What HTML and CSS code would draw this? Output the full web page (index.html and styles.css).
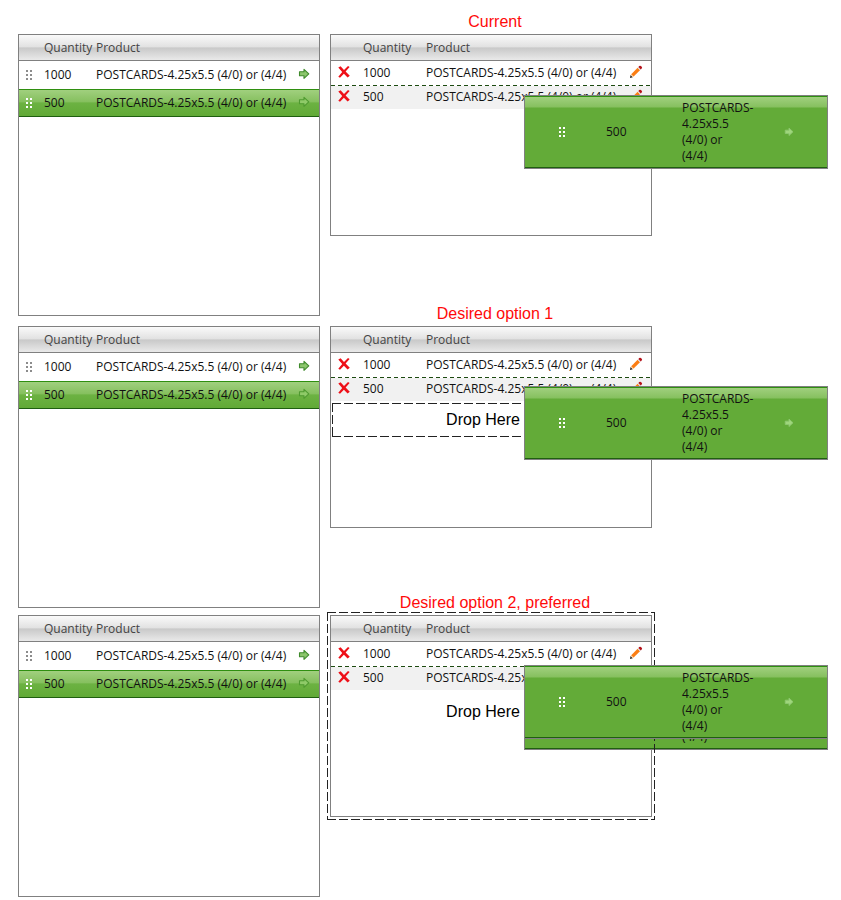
FILE: index.html
```html
<!DOCTYPE html>
<html lang="en">
<head>
	<meta charset="UTF-8" />
	<meta name="viewport" content="width=device-width, initial-scale=1.0" />
	<title>Drag and drop options</title>
	<link rel="stylesheet" href="styles.css">
</head>
<body>
	<svg class="symbols" aria-hidden="true">
		<symbol id="grip" viewBox="0 0 8 10">
			<path d="M1 0h2v2h-2zM5 0h2v2h-2zM1 4h2v2h-2zM5 4h2v2h-2zM1 8h2v2h-2zM5 8h2v2h-2z"/>
		</symbol>
		<symbol id="arrow" viewBox="0 0 12 12">
			<path d="M1.5 3.8H6V1.3L10.8 5.8L6 10.3V7.8H1.5z" stroke-width="1.1" stroke-linejoin="round"/>
		</symbol>
		<symbol id="cross" viewBox="0 0 12 12">
			<path d="M0.3 1.6L2.6 0.2L6 3.9L10 0L11.6 0.9L7.6 5.4L11.8 9.8L9.6 11.4L5.9 7.7L2 11.8L0.3 10.7L4.2 6z" fill="#ee1018"/>
		</symbol>
		<symbol id="pencil" viewBox="0 0 14 14">
			<path d="M1 13L1.6 10L3.8 12.3z" fill="#222"/>
			<path d="M1.6 10L2.2 9.2L4.6 11.6L3.8 12.3z" fill="#f7cf9c"/>
			<path d="M2.2 9.2L8.6 2.8L11 5.2L4.6 11.6z" fill="#fb7e14"/>
			<path d="M8.6 2.8L9.4 2L11.8 4.4L11 5.2z" fill="#ddd"/>
			<path d="M9.4 2L10.2 1.1Q11.4 0.4 12.5 1.4T12.7 3.5L11.8 4.4z" fill="#b5121a"/>
		</symbol>
	</svg>

	<section class="scenario">
		<div class="panel source">
			<table>
				<thead>
					<tr><th class="tool"></th><th class="qty">Quantity</th><th>Product</th><th class="act"></th></tr>
				</thead>
				<tbody>
					<tr>
						<td><svg class="grip"><use href="#grip"/></svg></td>
						<td>1000</td>
						<td>POSTCARDS-4.25x5.5 (4/0) or (4/4)</td>
						<td><button aria-label="Add 1000"><svg class="arrow"><use href="#arrow"/></svg></button></td>
					</tr>
					<tr class="active">
						<td><svg class="grip"><use href="#grip"/></svg></td>
						<td>500</td>
						<td>POSTCARDS-4.25x5.5 (4/0) or (4/4)</td>
						<td><button aria-label="Add 500"><svg class="arrow"><use href="#arrow"/></svg></button></td>
					</tr>
				</tbody>
			</table>
		</div>
		<div class="result">
			<h2>Current</h2>
			<div class="panel target">
				<table>
					<thead>
						<tr><th class="tool"></th><th class="qty">Quantity</th><th>Product</th><th class="act"></th></tr>
					</thead>
					<tbody>
						<tr>
							<td><button aria-label="Remove 1000"><svg class="cross"><use href="#cross"/></svg></button></td>
							<td>1000</td>
							<td>POSTCARDS-4.25x5.5 (4/0) or (4/4)</td>
							<td><button aria-label="Edit 1000"><svg class="pencil"><use href="#pencil"/></svg></button></td>
						</tr>
						<tr>
							<td><button aria-label="Remove 500"><svg class="cross"><use href="#cross"/></svg></button></td>
							<td>500</td>
							<td>POSTCARDS-4.25x5.5 (4/0) or (4/4)</td>
							<td><button aria-label="Edit 500"><svg class="pencil"><use href="#pencil"/></svg></button></td>
						</tr>
					</tbody>
				</table>
				<div class="ghost">
					<svg class="grip"><use href="#grip"/></svg>
					<span>500</span>
					<span class="name">POSTCARDS-4.25x5.5 (4/0) or (4/4)</span>
					<svg class="arrow"><use href="#arrow"/></svg>
				</div>
			</div>
		</div>
	</section>

	<section class="scenario option-one">
		<div class="panel source">
			<table>
				<thead>
					<tr><th class="tool"></th><th class="qty">Quantity</th><th>Product</th><th class="act"></th></tr>
				</thead>
				<tbody>
					<tr>
						<td><svg class="grip"><use href="#grip"/></svg></td>
						<td>1000</td>
						<td>POSTCARDS-4.25x5.5 (4/0) or (4/4)</td>
						<td><button aria-label="Add 1000"><svg class="arrow"><use href="#arrow"/></svg></button></td>
					</tr>
					<tr class="active">
						<td><svg class="grip"><use href="#grip"/></svg></td>
						<td>500</td>
						<td>POSTCARDS-4.25x5.5 (4/0) or (4/4)</td>
						<td><button aria-label="Add 500"><svg class="arrow"><use href="#arrow"/></svg></button></td>
					</tr>
				</tbody>
			</table>
		</div>
		<div class="result">
			<h2>Desired option 1</h2>
			<div class="panel target">
				<table>
					<thead>
						<tr><th class="tool"></th><th class="qty">Quantity</th><th>Product</th><th class="act"></th></tr>
					</thead>
					<tbody>
						<tr>
							<td><button aria-label="Remove 1000"><svg class="cross"><use href="#cross"/></svg></button></td>
							<td>1000</td>
							<td>POSTCARDS-4.25x5.5 (4/0) or (4/4)</td>
							<td><button aria-label="Edit 1000"><svg class="pencil"><use href="#pencil"/></svg></button></td>
						</tr>
						<tr>
							<td><button aria-label="Remove 500"><svg class="cross"><use href="#cross"/></svg></button></td>
							<td>500</td>
							<td>POSTCARDS-4.25x5.5 (4/0) or (4/4)</td>
							<td><button aria-label="Edit 500"><svg class="pencil"><use href="#pencil"/></svg></button></td>
						</tr>
					</tbody>
				</table>
				<div class="drop dashed">Drop Here</div>
				<div class="ghost">
					<svg class="grip"><use href="#grip"/></svg>
					<span>500</span>
					<span class="name">POSTCARDS-4.25x5.5 (4/0) or (4/4)</span>
					<svg class="arrow"><use href="#arrow"/></svg>
				</div>
			</div>
		</div>
	</section>

	<section class="scenario option-two">
		<div class="panel source">
			<table>
				<thead>
					<tr><th class="tool"></th><th class="qty">Quantity</th><th>Product</th><th class="act"></th></tr>
				</thead>
				<tbody>
					<tr>
						<td><svg class="grip"><use href="#grip"/></svg></td>
						<td>1000</td>
						<td>POSTCARDS-4.25x5.5 (4/0) or (4/4)</td>
						<td><button aria-label="Add 1000"><svg class="arrow"><use href="#arrow"/></svg></button></td>
					</tr>
					<tr class="active">
						<td><svg class="grip"><use href="#grip"/></svg></td>
						<td>500</td>
						<td>POSTCARDS-4.25x5.5 (4/0) or (4/4)</td>
						<td><button aria-label="Add 500"><svg class="arrow"><use href="#arrow"/></svg></button></td>
					</tr>
				</tbody>
			</table>
		</div>
		<div class="result">
			<h2>Desired option 2, preferred</h2>
			<div class="panel target">
				<table>
					<thead>
						<tr><th class="tool"></th><th class="qty">Quantity</th><th>Product</th><th class="act"></th></tr>
					</thead>
					<tbody>
						<tr>
							<td><button aria-label="Remove 1000"><svg class="cross"><use href="#cross"/></svg></button></td>
							<td>1000</td>
							<td>POSTCARDS-4.25x5.5 (4/0) or (4/4)</td>
							<td><button aria-label="Edit 1000"><svg class="pencil"><use href="#pencil"/></svg></button></td>
						</tr>
						<tr>
							<td><button aria-label="Remove 500"><svg class="cross"><use href="#cross"/></svg></button></td>
							<td>500</td>
							<td>POSTCARDS-4.25x5.5 (4/0) or (4/4)</td>
							<td><button aria-label="Edit 500"><svg class="pencil"><use href="#pencil"/></svg></button></td>
						</tr>
					</tbody>
				</table>
				<div class="drop">Drop Here</div>
				<div class="ghost behind">
					<span class="name">POSTCARDS-4.25x5.5 (4/0) or (4/4)</span>
				</div>
				<div class="outline dashed"></div>
				<div class="ghost">
					<svg class="grip"><use href="#grip"/></svg>
					<span>500</span>
					<span class="name">POSTCARDS-4.25x5.5 (4/0) or (4/4)</span>
					<svg class="arrow"><use href="#arrow"/></svg>
				</div>
			</div>
		</div>
	</section>
</body>
</html>
```
FILE: styles.css
```css
* {
	box-sizing: border-box;
}
body {
	margin: 0;
	padding: 34px 189px 0 18px;
	background-color: #fff;
	color: #111;
	font-family: "Open Sans", "Noto Sans", sans-serif;
	font-size: 12px;
	line-height: 16px;
}
.symbols {
	display: block;
	width: 0;
	height: 0;
}
.scenario {
	display: grid;
	grid-template-columns: 302fr 322fr;
	column-gap: 10px;
	align-items: start;
	margin-bottom: 10px;
}
.option-one {
	margin-bottom: 7px;
}
.option-two {
	margin-bottom: 0;
}

/* red captions hang above the right panels */
.result {
	margin-top: -24px;
}
h2 {
	margin: 0;
	padding-left: 8px;
	color: #ff0a0a;
	font-family: "Liberation Sans", Arial, sans-serif;
	font-size: 16px;
	font-weight: normal;
	line-height: 24px;
	text-align: center;
}

.panel {
	position: relative;
	border: 1px solid #808080;
	background-color: #fff;
}
.source {
	min-height: 282px;
}
.target {
	min-height: 202px;
}
table {
	width: 100%;
	border-collapse: separate;
	border-spacing: 0;
	table-layout: fixed;
}
thead tr {
	background: linear-gradient(#fafafa, #e2e2e2 45%, #c9c9c9 50%, #ececec);
}
th {
	height: 26px;
	padding: 0;
	border-bottom: 1px solid #808080;
	color: #444;
	font-weight: normal;
	text-align: left;
}
td {
	height: 28px;
	padding: 0;
	white-space: nowrap;
}
.source .tool {
	width: 25px;
}
.source .qty {
	width: 52px;
}
.act {
	width: 24px;
}
.target .tool {
	width: 32px;
}
.target .qty {
	width: 63px;
}
.active td {
	border-top: 1px solid #2f8f10;
	border-bottom: 1px solid #1f5f10;
}
.active {
	background: linear-gradient(#a3d181, #86c05f 45%, #6cb242 50%, #60a935);
}
.target td {
	height: 23px;
	padding-bottom: 2px;
}
.target tbody tr:first-child td {
	height: 25px;
}
.target tbody tr:first-child {
	background: repeating-linear-gradient(90deg, #1c4a10 0 4px, transparent 4px 7px) bottom / 100% 1px no-repeat;
}
.target tbody tr:last-child {
	background-color: #f1f1f1;
}

button {
	display: block;
	padding: 0;
	border: none;
	background: none;
	cursor: pointer;
}
svg {
	display: block;
}
.grip {
	width: 8px;
	height: 10px;
	margin-left: 6px;
	fill: #8c8c8c;
}
.arrow {
	width: 12px;
	height: 12px;
	margin-left: 3px;
	fill: #8cc66d;
	stroke: #3f8a2c;
}
.cross {
	width: 12px;
	height: 12px;
	margin-left: 7px;
}
.pencil {
	width: 14px;
	height: 14px;
	margin-left: 2px;
}
td .arrow, .cross, .pencil {
	margin-bottom: 2px;
}
.active .grip, .ghost .grip {
	fill: #fff;
}
.active .arrow {
	fill: #8fca68;
	stroke: #4f9a30;
}
.ghost .arrow {
	width: 10px;
	height: 10px;
	fill: #9fd67c;
	stroke: #8cc66d;
}

.dashed {
	background:
		repeating-linear-gradient(90deg, #222 0 9px, transparent 9px 12px) top / 100% 1px no-repeat,
		repeating-linear-gradient(90deg, #222 0 9px, transparent 9px 12px) bottom / 100% 1px no-repeat,
		repeating-linear-gradient(#222 0 9px, transparent 9px 12px) left / 1px 100% no-repeat,
		repeating-linear-gradient(#222 0 9px, transparent 9px 12px) right / 1px 100% no-repeat;
}
.drop {
	margin: 2px 1px;
	padding-right: 16px;
	color: #000;
	font-family: "Liberation Sans", Arial, sans-serif;
	font-size: 16px;
	line-height: 34px;
	text-align: center;
}
.option-two .drop {
	line-height: 40px;
}
.outline {
	position: absolute;
	inset: -4px;
}

/* the row that follows the cursor */
.ghost {
	position: absolute;
	top: 60px;
	left: 60%;
	display: grid;
	grid-template-columns: 48px 76px 102px 1fr;
	align-items: center;
	width: 304px;
	margin-left: 1px;
	padding: 4px 0 4px 33px;
	border: 1px solid #808080;
	background: linear-gradient(#a3d181, #86c05f 11px, #63ab38 12px);
	box-shadow: inset 0 1px #2f8f10, inset 0 -1px #1f5f10;
}
.ghost svg {
	margin-left: 0;
}
.ghost .name {
	grid-column: 3;
	width: 64px;
}
.option-one .ghost {
	top: 59px;
}
.option-two .ghost {
	top: 49px;
}
.option-two .behind {
	top: 60px;
}
```
